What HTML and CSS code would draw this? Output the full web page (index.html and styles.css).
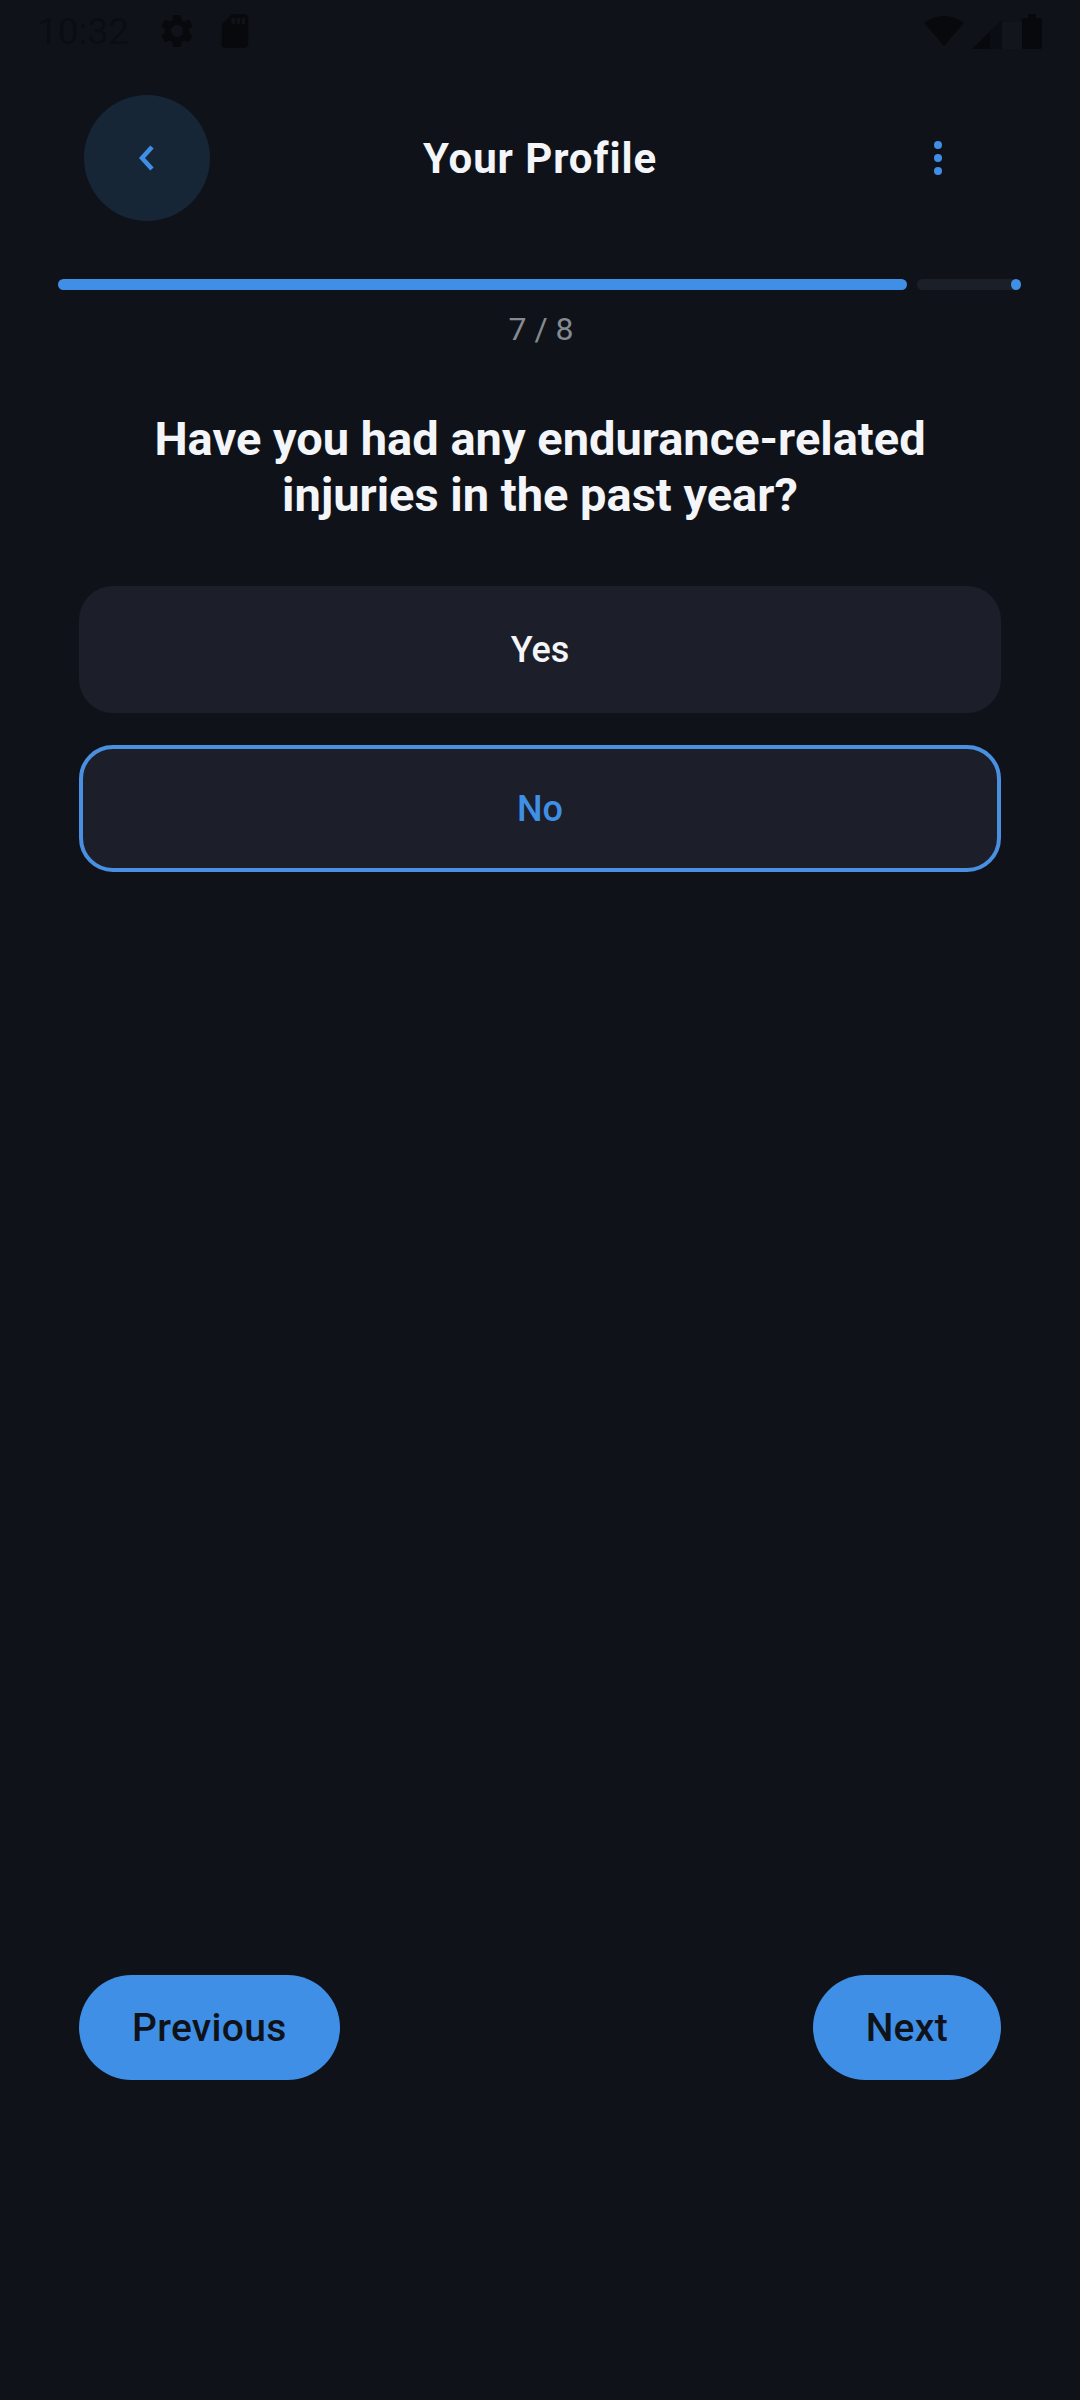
FILE: index.html
```html
<!DOCTYPE html>
<html lang="en">
<head>
  <meta charset="UTF-8" />
  <meta name="viewport" content="width=device-width, initial-scale=1.0" />
  <title>Your Profile</title>
  <link rel="stylesheet" href="styles.css">
</head>
<body>
  <div class="page">
    <!-- status bar -->
    <div class="status-bar">
      <span class="status-time">10:32</span>
      <svg class="status-icon gear-icon" viewBox="0 0 24 24"><path d="M19.14 12.94c.04-.3.06-.61.06-.94 0-.32-.02-.64-.07-.94l2.03-1.58c.18-.14.23-.41.12-.61l-1.92-3.32c-.12-.22-.37-.29-.59-.22l-2.39.96c-.5-.38-1.03-.7-1.62-.94l-.36-2.54c-.04-.24-.24-.41-.48-.41h-3.84c-.24 0-.43.17-.47.41l-.36 2.54c-.59.24-1.13.57-1.62.94l-2.39-.96c-.22-.08-.47 0-.59.22L2.74 8.87c-.12.21-.08.47.12.61l2.03 1.58c-.05.3-.09.63-.09.94s.02.64.07.94l-2.03 1.58c-.18.14-.23.41-.12.61l1.92 3.32c.12.22.37.29.59.22l2.39-.96c.5.38 1.03.7 1.62.94l.36 2.54c.05.24.24.41.48.41h3.84c.24 0 .44-.17.47-.41l.36-2.54c.59-.24 1.13-.56 1.62-.94l2.39.96c.22.08.47 0 .59-.22l1.92-3.32c.12-.22.07-.47-.12-.61l-2.01-1.58zM12 15.6c-1.98 0-3.6-1.62-3.6-3.6s1.62-3.6 3.6-3.6 3.6 1.62 3.6 3.6-1.62 3.6-3.6 3.6z"/></svg>
      <svg class="status-icon sd-icon" viewBox="0 0 24 24"><path d="M18 2h-8L4.02 8 4 20c0 1.1.9 2 2 2h12c1.1 0 2-.9 2-2V4c0-1.1-.9-2-2-2zm-6 6h-2V4h2v4zm3 0h-2V4h2v4zm3 0h-2V4h2v4z"/></svg>
      <div class="status-right">
        <svg class="wifi-icon" viewBox="0 0 40 30"><path d="M20 30 40 7C35 3 28 0 20 0S5 3 0 7z"/></svg>
        <svg class="signal-icon" viewBox="0 0 50 30"><path class="signal-empty" d="M18 30V15L30 3h20v27z"/><path d="M0 30 18 12v18z"/><path class="signal-mid" d="M18 30V12L30 1v29z"/></svg>
        <svg class="battery-icon" viewBox="0 0 20 35"><path d="M6 0h8v4h4c1 0 2 1 2 2v27c0 1-1 2-2 2H2c-1 0-2-1-2-2V6c0-1 1-2 2-2h4z"/></svg>
      </div>
    </div>

    <!-- header -->
    <div class="top-bar">
      <div class="back-button">
        <svg viewBox="0 0 20 28" class="back-icon"><path d="M15 3 5 14l10 11"/></svg>
      </div>
      <div class="top-title">Your Profile</div>
      <div class="more-button">
        <span class="more-dot"></span>
        <span class="more-dot"></span>
        <span class="more-dot"></span>
      </div>
    </div>

    <!-- progress -->
    <div class="progress">
      <div class="progress-fill"></div>
      <div class="progress-track"><span class="progress-stop"></span></div>
    </div>
    <div class="progress-label">7 / 8</div>

    <!-- question -->
    <h1 class="question">Have you had any endurance-related<br>injuries in the past year?</h1>

    <div class="options">
      <div class="option">Yes</div>
      <div class="option option-selected">No</div>
    </div>

    <div class="nav-buttons">
      <div class="nav-button">Previous</div>
      <div class="nav-button">Next</div>
    </div>
  </div>
</body>
</html>
```

FILE: styles.css
```css
body {
  margin: 0;
  background-color: #0f1319;
  color: #f3f5f8;
  font-family: Roboto, "Liberation Sans", sans-serif;
}

.page {
  display: flex;
  flex-direction: column;
  height: 2400px;
  overflow: hidden;
}

.status-bar {
  display: flex;
  align-items: center;
  height: 62px;
  padding: 0 38px 0 37px;
}

.status-time {
  font-size: 37px;
  color: #0a0d12;
  width: 120px;
}

.status-icon {
  width: 40px;
  height: 40px;
  fill: #07090c;
}

.sd-icon {
  margin-left: 18px;
}

.status-right {
  display: flex;
  align-items: flex-end;
  margin-left: auto;
  fill: #07090c;
}

.wifi-icon {
  width: 40px;
  height: 30px;
  margin-right: 8px;
  margin-bottom: 3px;
}

.signal-icon {
  width: 50px;
  height: 30px;
}

.signal-empty {
  fill: #12161c;
}

.signal-mid {
  fill: #0a0e14;
}

.battery-icon {
  width: 20px;
  height: 35px;
}

.top-bar {
  display: grid;
  grid-template-columns: 126px 1fr 126px;
  align-items: center;
  margin-top: 33px;
  padding: 0 84px;
}

.back-button {
  display: flex;
  align-items: center;
  justify-content: center;
  width: 126px;
  height: 126px;
  border-radius: 50%;
  background-color: #162637;
}

.back-icon {
  width: 20px;
  height: 28px;
  fill: none;
  stroke: #3f8fe6;
  stroke-width: 4.5;
}

.top-title {
  text-align: center;
  font-size: 42px;
  font-weight: 700;
  letter-spacing: 0.9px;
}

.more-button {
  display: flex;
  flex-direction: column;
  align-items: center;
  gap: 5px;
  justify-self: end;
  margin-right: 54px;
}

.more-dot {
  width: 8px;
  height: 8px;
  border-radius: 50%;
  background-color: #3f8fe6;
}

.progress {
  display: flex;
  gap: 10px;
  height: 11px;
  margin-top: 58px;
  padding: 0 59px 0 58px;
}

.progress-fill {
  width: 849px;
  border-radius: 6px;
  background-color: #3f8fe6;
}

.progress-track {
  position: relative;
  flex: 1;
  border-radius: 6px;
  background-color: #1b1f28;
}

.progress-stop {
  position: absolute;
  top: 0;
  right: 0;
  width: 10px;
  height: 11px;
  border-radius: 50%;
  background-color: #3f8fe6;
}

.progress-label {
  margin-top: 20px;
  padding-left: 2px;
  text-align: center;
  font-size: 32px;
  line-height: 38px;
  color: #858a93;
}

.question {
  margin: 63px 0 0;
  text-align: center;
  font-size: 47px;
  font-weight: 700;
  line-height: 56px;
}

.options {
  display: flex;
  flex-direction: column;
  gap: 32px;
  margin-top: 63px;
  padding: 0 79px;
}

.option {
  display: flex;
  align-items: center;
  justify-content: center;
  box-sizing: border-box;
  height: 127px;
  border-radius: 34px;
  background-color: #1c1f29;
  font-size: 36px;
  font-weight: 500;
}

.option-selected {
  border: 4px solid #4a90e2;
  color: #3f8fe6;
}

.nav-buttons {
  display: flex;
  justify-content: space-between;
  margin-top: auto;
  margin-bottom: 320px;
  padding: 0 79px;
}

.nav-button {
  display: flex;
  align-items: center;
  height: 105px;
  padding: 0 53px;
  border-radius: 53px;
  background-color: #3f8fe6;
  color: #0f1319;
  font-size: 39px;
  font-weight: 500;
  letter-spacing: 0.3px;
}
```
